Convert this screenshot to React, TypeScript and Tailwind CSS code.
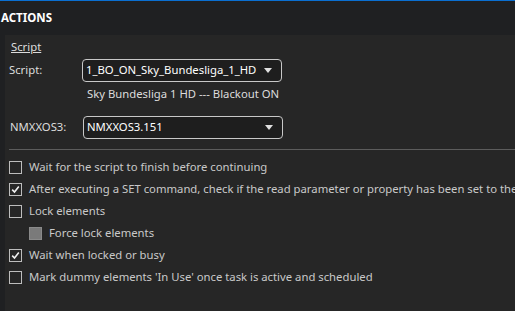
import React from "react";

function Check({ checked = false, disabled = false }: { checked?: boolean; disabled?: boolean }) {
  if (disabled) {
    return <span className="block h-[13px] w-[13px] shrink-0 border border-[#8a8a8a] bg-[#7a7a7a]" />;
  }
  return (
    <span className="flex h-[13px] w-[13px] shrink-0 items-center justify-center border border-[#bdbdbd] bg-[#262626]">
      {checked && (
        <svg width="9" height="9" viewBox="0 0 9 9">
          <path d="M1.2 4.6 L3.5 7 L7.8 1.5" fill="none" stroke="#f0f0f0" strokeWidth="1.6" />
        </svg>
      )}
    </span>
  );
}

function Dropdown({ value }: { value: string }) {
  return (
    <div className="flex h-[23px] w-[200px] items-center justify-between rounded-[4px] border border-[#c8c8c8] bg-[#1e1e1e] pl-[3px] pr-[9px] text-white">
      <span className="whitespace-nowrap">{value}</span>
      <svg width="8" height="5" viewBox="0 0 8 5" className="shrink-0">
        <path d="M0 0 H8 L4 5 Z" fill="#e0e0e0" />
      </svg>
    </div>
  );
}

const options = [
  { label: "Wait for the script to finish before continuing" },
  { label: "After executing a SET command, check if the read parameter or property has been set to the requested value", checked: true },
  { label: "Lock elements" },
  { label: "Force lock elements", indent: true, disabled: true },
  { label: "Wait when locked or busy", checked: true },
  { label: "Mark dummy elements 'In Use' once task is active and scheduled" },
];

export default function App() {
  return (
    <div className="h-[311px] w-[515px] overflow-hidden bg-[#1f2022] font-['Noto_Sans',sans-serif] text-[11.3px] text-[#dcdcdc]">
      <div className="h-px bg-[#0a6fd1]" />
      <div className="flex h-[34px] items-center pl-[1px] text-[11.5px] font-bold text-white">ACTIONS</div>
      <div className="ml-[5px] h-[276px] overflow-hidden bg-[#262626] pt-[3px]">
        <div className="pl-[6px] leading-[17px] underline">Script</div>
        <div className="mt-[4px] flex items-center pl-[4px]">
          <span className="w-[73px]">Script:</span>
          <Dropdown value="1_BO_ON_Sky_Bundesliga_1_HD" />
        </div>
        <div className="mt-[2px] pl-[82px] leading-[20px]">Sky Bundesliga 1 HD --- Blackout ON</div>
        <div className="mt-[12px] flex items-center pl-[5px]">
          <span className="w-[73px]">NMXXOS3:</span>
          <Dropdown value="NMXXOS3.151" />
        </div>
        <div className="ml-[4px] mt-[10px] h-[1px] bg-[#5c5c5c]" />
        <div className="mt-[6px] flex flex-col">
          {options.map((o) => (
            <div
              key={o.label}
              className={`flex h-[22px] items-center gap-[7px] whitespace-nowrap text-[#c9c9c9] ${o.indent ? "pl-[24px]" : "pl-[4px]"}`}
            >
              <Check checked={o.checked} disabled={o.disabled} />
              <span>{o.label}</span>
            </div>
          ))}
        </div>
      </div>
    </div>
  );
}
